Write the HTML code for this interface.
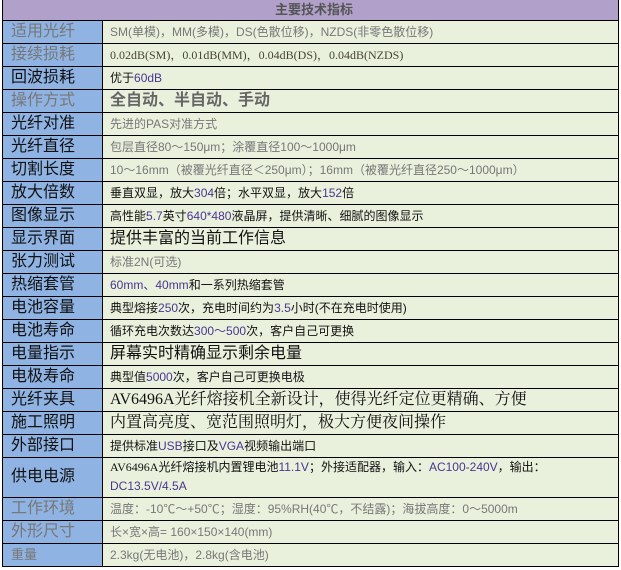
<!DOCTYPE html>
<html><head><meta charset="utf-8"><style>
body{margin:0;background:#fff;width:621px;height:570px;overflow:hidden;font-family:"Liberation Sans","Noto Sans CJK SC",sans-serif}
table{position:absolute;left:2px;top:0;width:617px;border-collapse:collapse;table-layout:fixed}
td{border:1px solid #000;padding:0 0 0 7px;height:22px;line-height:20px;white-space:nowrap;overflow:hidden;font-size:12px;color:#111;background:#e9f1dd;box-sizing:border-box}
tr{height:23px}
td.l{background:#8fb3e3;font-size:16px;padding-left:8px;color:#111}
td.g{color:#777}
.n{color:#4a3590}
.big{font-size:16px}
tr.h{height:20px}
tr.h td{background:#b1a0c9;height:20px;line-height:18px;text-align:center;font-size:13px;font-weight:bold;color:#555;border-top:none}
</style></head><body>
<table>
<col style="width:100px"><col>
<tr class="h"><td colspan="2">主要技术指标</td></tr>
<tr><td class="l g">适用光纤</td><td class="g">SM(单模)，MM(多模)，DS(色散位移)，NZDS(非零色散位移)</td></tr>
<tr><td class="l g">接续损耗</td><td style="font-family:'Liberation Serif','Noto Serif CJK SC',serif;color:#443">0.02dB(SM)，0.01dB(MM)，0.04dB(DS)，0.04dB(NZDS)</td></tr>
<tr><td class="l">回波损耗</td><td>优于<span class="n">60dB</span></td></tr>
<tr><td class="l g">操作方式</td><td class="g big" style="font-weight:bold;color:#666">全自动、半自动、手动</td></tr>
<tr><td class="l">光纤对准</td><td class="g">先进的PAS对准方式</td></tr>
<tr><td class="l">光纤直径</td><td class="g">包层直径80～150μm；涂覆直径100～1000μm</td></tr>
<tr><td class="l">切割长度</td><td class="g">10～16mm（被覆光纤直径＜250μm）；16mm（被覆光纤直径250～1000μm）</td></tr>
<tr><td class="l">放大倍数</td><td>垂直双显，放大<span class="n">304</span>倍；水平双显，放大<span class="n">152</span>倍</td></tr>
<tr><td class="l">图像显示</td><td>高性能<span class="n">5.7</span>英寸<span class="n">640*480</span>液晶屏，提供清晰、细腻的图像显示</td></tr>
<tr><td class="l">显示界面</td><td class="big">提供丰富的当前工作信息</td></tr>
<tr><td class="l">张力测试</td><td class="g">标准2N(可选)</td></tr>
<tr><td class="l">热缩套管</td><td><span class="n">60mm、40mm</span>和一系列热缩套管</td></tr>
<tr><td class="l">电池容量</td><td>典型熔接<span class="n">250</span>次，充电时间约为<span class="n">3.5</span>小时(不在充电时使用)</td></tr>
<tr><td class="l">电池寿命</td><td>循环充电次数达<span class="n">300～500</span>次，客户自己可更换</td></tr>
<tr><td class="l">电量指示</td><td class="big">屏幕实时精确显示剩余电量</td></tr>
<tr><td class="l">电极寿命</td><td>典型值<span class="n">5000</span>次，客户自己可更换电极</td></tr>
<tr><td class="l">光纤夹具</td><td class="big" style="font-family:'Liberation Serif','Noto Serif CJK SC',serif">AV6496A光纤熔接机全新设计，使得光纤定位更精确、方便</td></tr>
<tr><td class="l">施工照明</td><td class="big" style="font-family:'Liberation Serif','Noto Serif CJK SC',serif">内置高亮度、宽范围照明灯，极大方便夜间操作</td></tr>
<tr><td class="l">外部接口</td><td>提供标准<span class="n">USB</span>接口及<span class="n">VGA</span>视频输出端口</td></tr>
<tr style="height:40px"><td class="l" style="height:40px">供电电源</td><td style="height:40px;line-height:19px;white-space:normal"><span style="font-family:'Liberation Serif',serif">AV6496A</span>光纤熔接机内置锂电池<span class="n">11.1V</span>；外接适配器，输入：<span class="n">AC100-240V</span>，输出：<span class="n">DC13.5V/4.5A</span></td></tr>
<tr><td class="l g">工作环境</td><td class="g">温度：-10℃～+50℃；湿度：95%RH(40℃，不结露)；海拔高度：0～5000m</td></tr>
<tr><td class="l g">外形尺寸</td><td class="g">长×宽×高= 160×150×140(mm)</td></tr>
<tr><td class="l g" style="font-size:13px">重量</td><td class="g">2.3kg(无电池)，2.8kg(含电池)</td></tr>
</table>
</body></html>
